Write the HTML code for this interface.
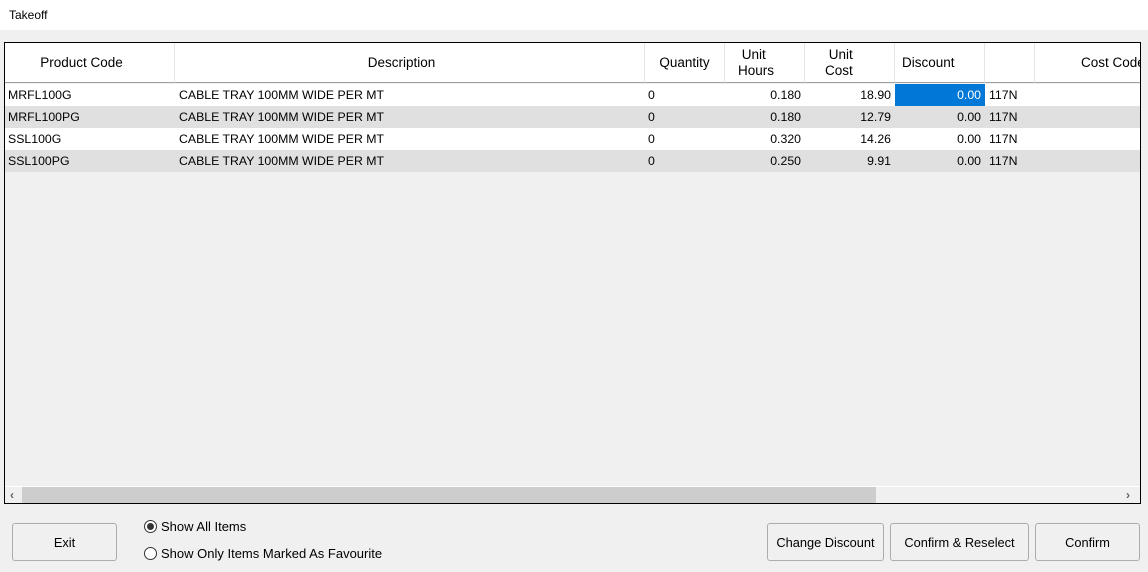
<!DOCTYPE html>
<html><head><meta charset="utf-8"><style>
*{margin:0;padding:0;box-sizing:border-box}
body{width:1148px;height:572px;background:#f0f0f0;font-family:"Liberation Sans","DejaVu Sans",sans-serif;font-size:12px;color:#000;position:relative;overflow:hidden}
.a{position:absolute;white-space:nowrap}
#title{left:0;top:0;width:1148px;height:30px;background:#fff}
#grid{left:4px;top:42px;width:1137px;height:462px;border:1px solid #000;background:#f0f0f0;overflow:hidden}
.hdr{position:absolute;top:0;height:40px;background:#fff;border-right:1px solid #e5e5e5;border-bottom:1px solid #a0a0a0;font-size:13.5px;display:flex;align-items:center;line-height:16px;white-space:nowrap}
.row{position:absolute;left:0;width:1135px;height:22px}
.c{position:absolute;top:0;height:22px;line-height:22px;font-size:12.3px}
.btn{position:absolute;height:38px;border:1px solid #adadad;border-radius:3px;background:#f0f0f0;font-size:12.8px;display:flex;align-items:center;justify-content:center}
.rad{position:absolute;width:13px;height:13px;border:1px solid #333;border-radius:50%;background:#fff}
.arr{position:absolute;top:444px;height:16px;line-height:16px;font-size:12px;font-weight:bold;color:#606060}
</style></head><body>
<div class="a" id="title"><span class="a" style="left:9px;top:8px;font-size:12px">Takeoff</span></div>
<div class="a" id="grid">
 <div class="hdr" style="left:0;width:170px;justify-content:center;padding-right:16px">Product Code</div>
 <div class="hdr" style="left:170px;width:470px;justify-content:center;padding-right:16px">Description</div>
 <div class="hdr" style="left:640px;width:80px;justify-content:center">Quantity</div>
 <div class="hdr" style="left:720px;width:80px;padding-left:13px"><div>&nbsp;Unit<br>Hours</div></div>
 <div class="hdr" style="left:800px;width:90px;padding-left:20px"><div>&nbsp;Unit<br>Cost</div></div>
 <div class="hdr" style="left:890px;width:90px;padding-left:7px">Discount</div>
 <div class="hdr" style="left:980px;width:50px"></div>
 <div class="hdr" style="left:1030px;width:120px;padding-left:46px;border-right:none">Cost Code</div>

 <div class="row" style="top:41px;background:#fff">
  <span class="c" style="left:3px">MRFL100G</span><span class="c" style="left:174px">CABLE TRAY 100MM WIDE PER MT</span>
  <span class="c" style="left:643px">0</span><span class="c" style="left:720px;width:76px;text-align:right">0.180</span>
  <span class="c" style="left:800px;width:86px;text-align:right">18.90</span>
  <span class="c" style="left:890px;width:90px;background:#0078d7;color:#fff;text-align:right;padding-right:4px">0.00</span>
  <span class="c" style="left:984px">117N</span></div>
 <div class="row" style="top:63px;background:#e0e0e0">
  <span class="c" style="left:3px">MRFL100PG</span><span class="c" style="left:174px">CABLE TRAY 100MM WIDE PER MT</span>
  <span class="c" style="left:643px">0</span><span class="c" style="left:720px;width:76px;text-align:right">0.180</span>
  <span class="c" style="left:800px;width:86px;text-align:right">12.79</span>
  <span class="c" style="left:890px;width:90px;text-align:right;padding-right:4px">0.00</span>
  <span class="c" style="left:984px">117N</span></div>
 <div class="row" style="top:85px;background:#fff">
  <span class="c" style="left:3px">SSL100G</span><span class="c" style="left:174px">CABLE TRAY 100MM WIDE PER MT</span>
  <span class="c" style="left:643px">0</span><span class="c" style="left:720px;width:76px;text-align:right">0.320</span>
  <span class="c" style="left:800px;width:86px;text-align:right">14.26</span>
  <span class="c" style="left:890px;width:90px;text-align:right;padding-right:4px">0.00</span>
  <span class="c" style="left:984px">117N</span></div>
 <div class="row" style="top:107px;background:#e0e0e0">
  <span class="c" style="left:3px">SSL100PG</span><span class="c" style="left:174px">CABLE TRAY 100MM WIDE PER MT</span>
  <span class="c" style="left:643px">0</span><span class="c" style="left:720px;width:76px;text-align:right">0.250</span>
  <span class="c" style="left:800px;width:86px;text-align:right">9.91</span>
  <span class="c" style="left:890px;width:90px;text-align:right;padding-right:4px">0.00</span>
  <span class="c" style="left:984px">117N</span></div>

 <div class="a" style="left:0;top:443px;width:1135px;height:1px;background:#fff"></div>
 <div class="a" style="left:0;top:444px;width:1135px;height:16px;background:#f0f0f0"></div>
 <div class="a" style="left:17px;top:444px;width:854px;height:16px;background:#cdcdcd"></div>
 <span class="arr" style="left:5px">&lsaquo;</span>
 <span class="arr" style="left:1121px">&rsaquo;</span>
</div>

<div class="btn" style="left:12px;top:523px;width:105px">Exit</div>
<div class="rad" style="left:144px;top:520px"><div style="position:absolute;left:2px;top:2px;width:7px;height:7px;border-radius:50%;background:#333"></div></div>
<span class="a" style="left:161px;top:519px;font-size:13px">Show All Items</span>
<div class="rad" style="left:144px;top:547px"></div>
<span class="a" style="left:161px;top:546px;font-size:13px">Show Only Items Marked As Favourite</span>
<div class="btn" style="left:767px;top:523px;width:117px">Change Discount</div>
<div class="btn" style="left:890px;top:523px;width:139px">Confirm &amp; Reselect</div>
<div class="btn" style="left:1035px;top:523px;width:105px">Confirm</div>
</body></html>
